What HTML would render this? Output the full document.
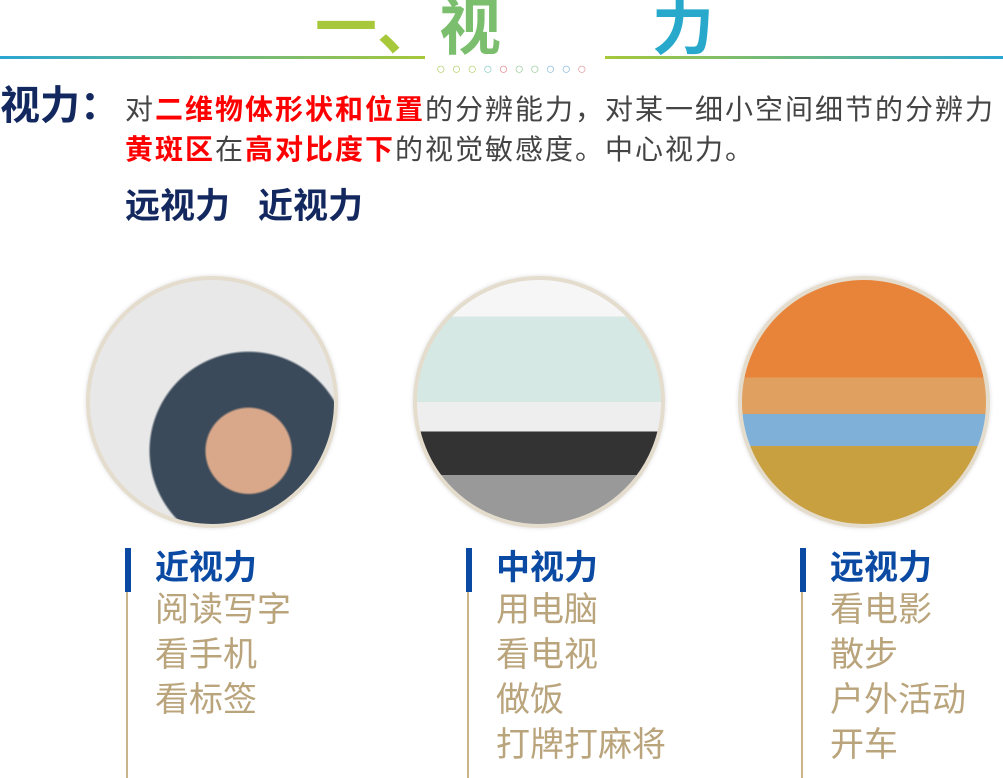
<!DOCTYPE html><html><head><meta charset="utf-8"><style>
body{margin:0;width:1003px;height:772px;overflow:hidden;background:#fff;position:relative;font-family:"Liberation Sans","Noto Sans CJK SC",sans-serif}
.a{position:absolute;white-space:nowrap}
.c{position:absolute;width:244px;height:244px;border-radius:50%;border:4px solid #e4dccd;overflow:hidden;box-shadow:0 0 4px #ddd}
.bar{position:absolute;width:6px;height:44px;background:#0b4aa3}
.ln{position:absolute;width:2px;height:230px;background:#c9b48c}
.h{position:absolute;font-size:34px;font-weight:bold;color:#0b4aa3;line-height:44px}
.it{position:absolute;font-size:34px;color:#b9a47c;line-height:45px}
</style></head><body>
<div class="a" style="left:0;top:56px;width:425px;height:3px;background:linear-gradient(90deg,#2aa6d3,#a6c83a)"></div>
<div class="a" style="left:605px;top:56px;width:398px;height:3px;background:linear-gradient(90deg,#a6c83a,#2aa6d3)"></div>
<div class="a" style="left:315px;top:-6px;font-size:62px;font-weight:bold;color:#a6c83a;line-height:70px">一、<span style="color:#7bbf6e">视</span></div>
<div class="a" style="left:652px;top:-6px;font-size:62px;font-weight:bold;color:#28a9cc;line-height:70px">力</div>
<div class="a" style="left:436px;top:60px;font-size:16px;line-height:20px;letter-spacing:6px"><span style="color:#b5cf6a">○○○</span><span style="color:#8cc">○</span><span style="color:#d88">○</span><span style="color:#9c9">○○</span><span style="color:#8bd">○○</span><span style="color:#d99">○</span></div>
<div class="a" style="left:0;top:80px;font-size:40px;font-weight:bold;color:#13285f;line-height:52px">视力：</div>
<div class="a" style="left:125px;top:92px;font-size:28px;letter-spacing:2px;color:#444;line-height:36px">对<b style="color:#f00">二维物体形状和位置</b>的分辨能力，对某一细小空间细节的分辨力</div>
<div class="a" style="left:125px;top:132px;font-size:28px;letter-spacing:2px;color:#444;line-height:36px"><b style="color:#f00">黄斑区</b>在<b style="color:#f00">高对比度下</b>的视觉敏感度。中心视力。</div>
<div class="a" style="left:125px;top:185px;font-size:35px;font-weight:bold;color:#13285f;line-height:44px">远视力<span style="margin-left:28px">近视力</span></div>
<div class="c" style="left:86px;top:276px;background:radial-gradient(circle at 65% 70%,#d9a88a 0 18%,#3a4a5a 19% 42%,#e8e8e8 43%)"></div>
<div class="c" style="left:413px;top:276px;background:linear-gradient(#f6f6f6 0 15%,#d6e8e3 15% 50%,#eee 50% 62%,#333 62% 80%,#999 80%)"></div>
<div class="c" style="left:738px;top:276px;background:linear-gradient(#e8843a 0 40%,#e0a060 40% 55%,#7fb0d8 55% 68%,#c8a040 68%)"></div>
<div class="ln" style="left:126px;top:548px"></div><div class="bar" style="left:125px;top:548px"></div>
<div class="h" style="left:155px;top:546px">近视力</div>
<div class="it" style="left:155px;top:588px">阅读写字<br>看手机<br>看标签</div>
<div class="ln" style="left:467px;top:548px"></div><div class="bar" style="left:466px;top:548px"></div>
<div class="h" style="left:496px;top:546px">中视力</div>
<div class="it" style="left:496px;top:588px">用电脑<br>看电视<br>做饭<br>打牌打麻将</div>
<div class="ln" style="left:801px;top:548px"></div><div class="bar" style="left:800px;top:548px"></div>
<div class="h" style="left:830px;top:546px">远视力</div>
<div class="it" style="left:830px;top:588px">看电影<br>散步<br>户外活动<br>开车</div>
</body></html>
